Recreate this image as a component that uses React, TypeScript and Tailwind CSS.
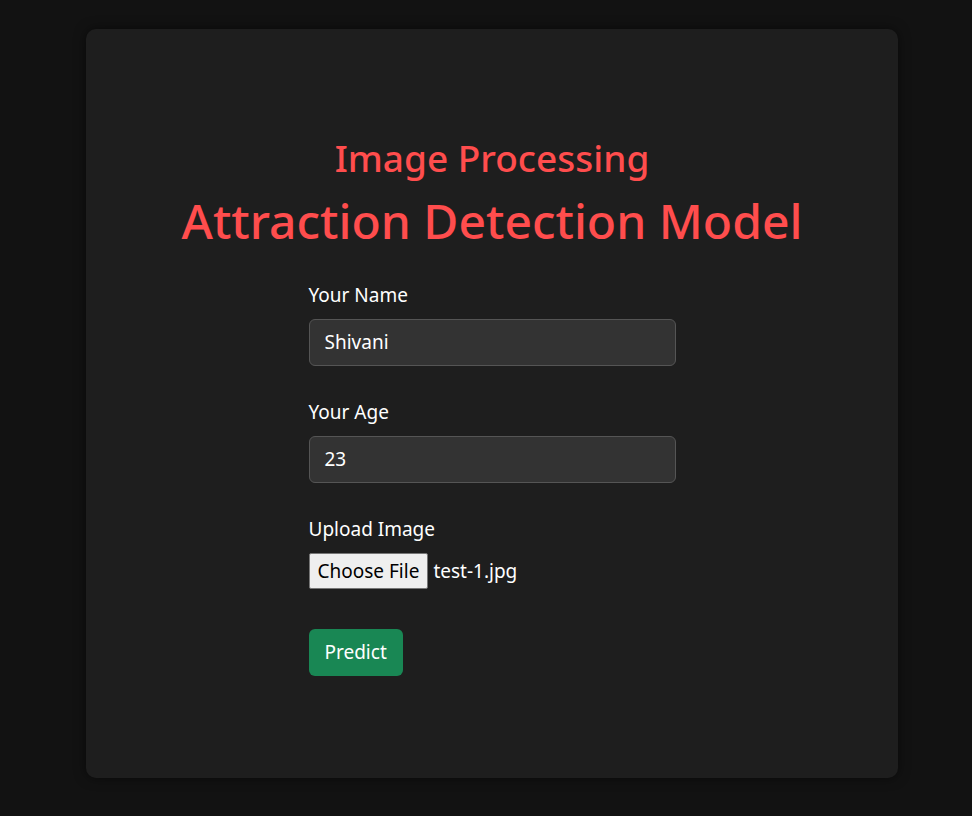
import React from "react";

export default function App() {
  return (
    <div
      className="min-h-screen bg-[#121212] pt-[29px] pb-[38px] px-[86px]"
      style={{ fontFamily: '"Noto Sans", "Open Sans", sans-serif' }}
    >
      <div className="w-[812px] h-[749px] bg-[#1e1e1e] rounded-[10px] shadow-[0_0_12px_rgba(0,0,0,0.5)] pt-[107px]">
        <h2 className="text-center text-[#ff4d4d] text-[37px] leading-[44px] font-medium">
          Image Processing
        </h2>
        <h1 className="text-center text-[#ff4d4d] text-[48px] leading-[58px] font-medium mt-[12px]">
          Attraction Detection Model
        </h1>
        <form className="w-[367px] mx-auto mt-[32px] text-white text-[19px]">
          <label className="block leading-[27px]">Your Name</label>
          <div className="mt-[10px] h-[47px] rounded-[6px] bg-[#333333] border border-[#555555] px-[15px] flex items-center">
            Shivani
          </div>
          <label className="block leading-[27px] mt-[33px]">Your Age</label>
          <div className="mt-[10px] h-[47px] rounded-[6px] bg-[#333333] border border-[#555555] px-[15px] flex items-center">
            23
          </div>
          <label className="block leading-[27px] mt-[33px]">Upload Image</label>
          <div className="mt-[10px] flex items-center">
            <span className="h-[36px] px-[8px] flex items-center bg-[#efefef] border border-[#767676] rounded-[2px] text-black">
              Choose File
            </span>
            <span className="ml-[5px]">test-1.jpg</span>
          </div>
          <button
            type="button"
            className="block mt-[40px] h-[47px] px-[16px] rounded-[6px] bg-[#198754] text-white"
          >
            Predict
          </button>
        </form>
      </div>
    </div>
  );
}
